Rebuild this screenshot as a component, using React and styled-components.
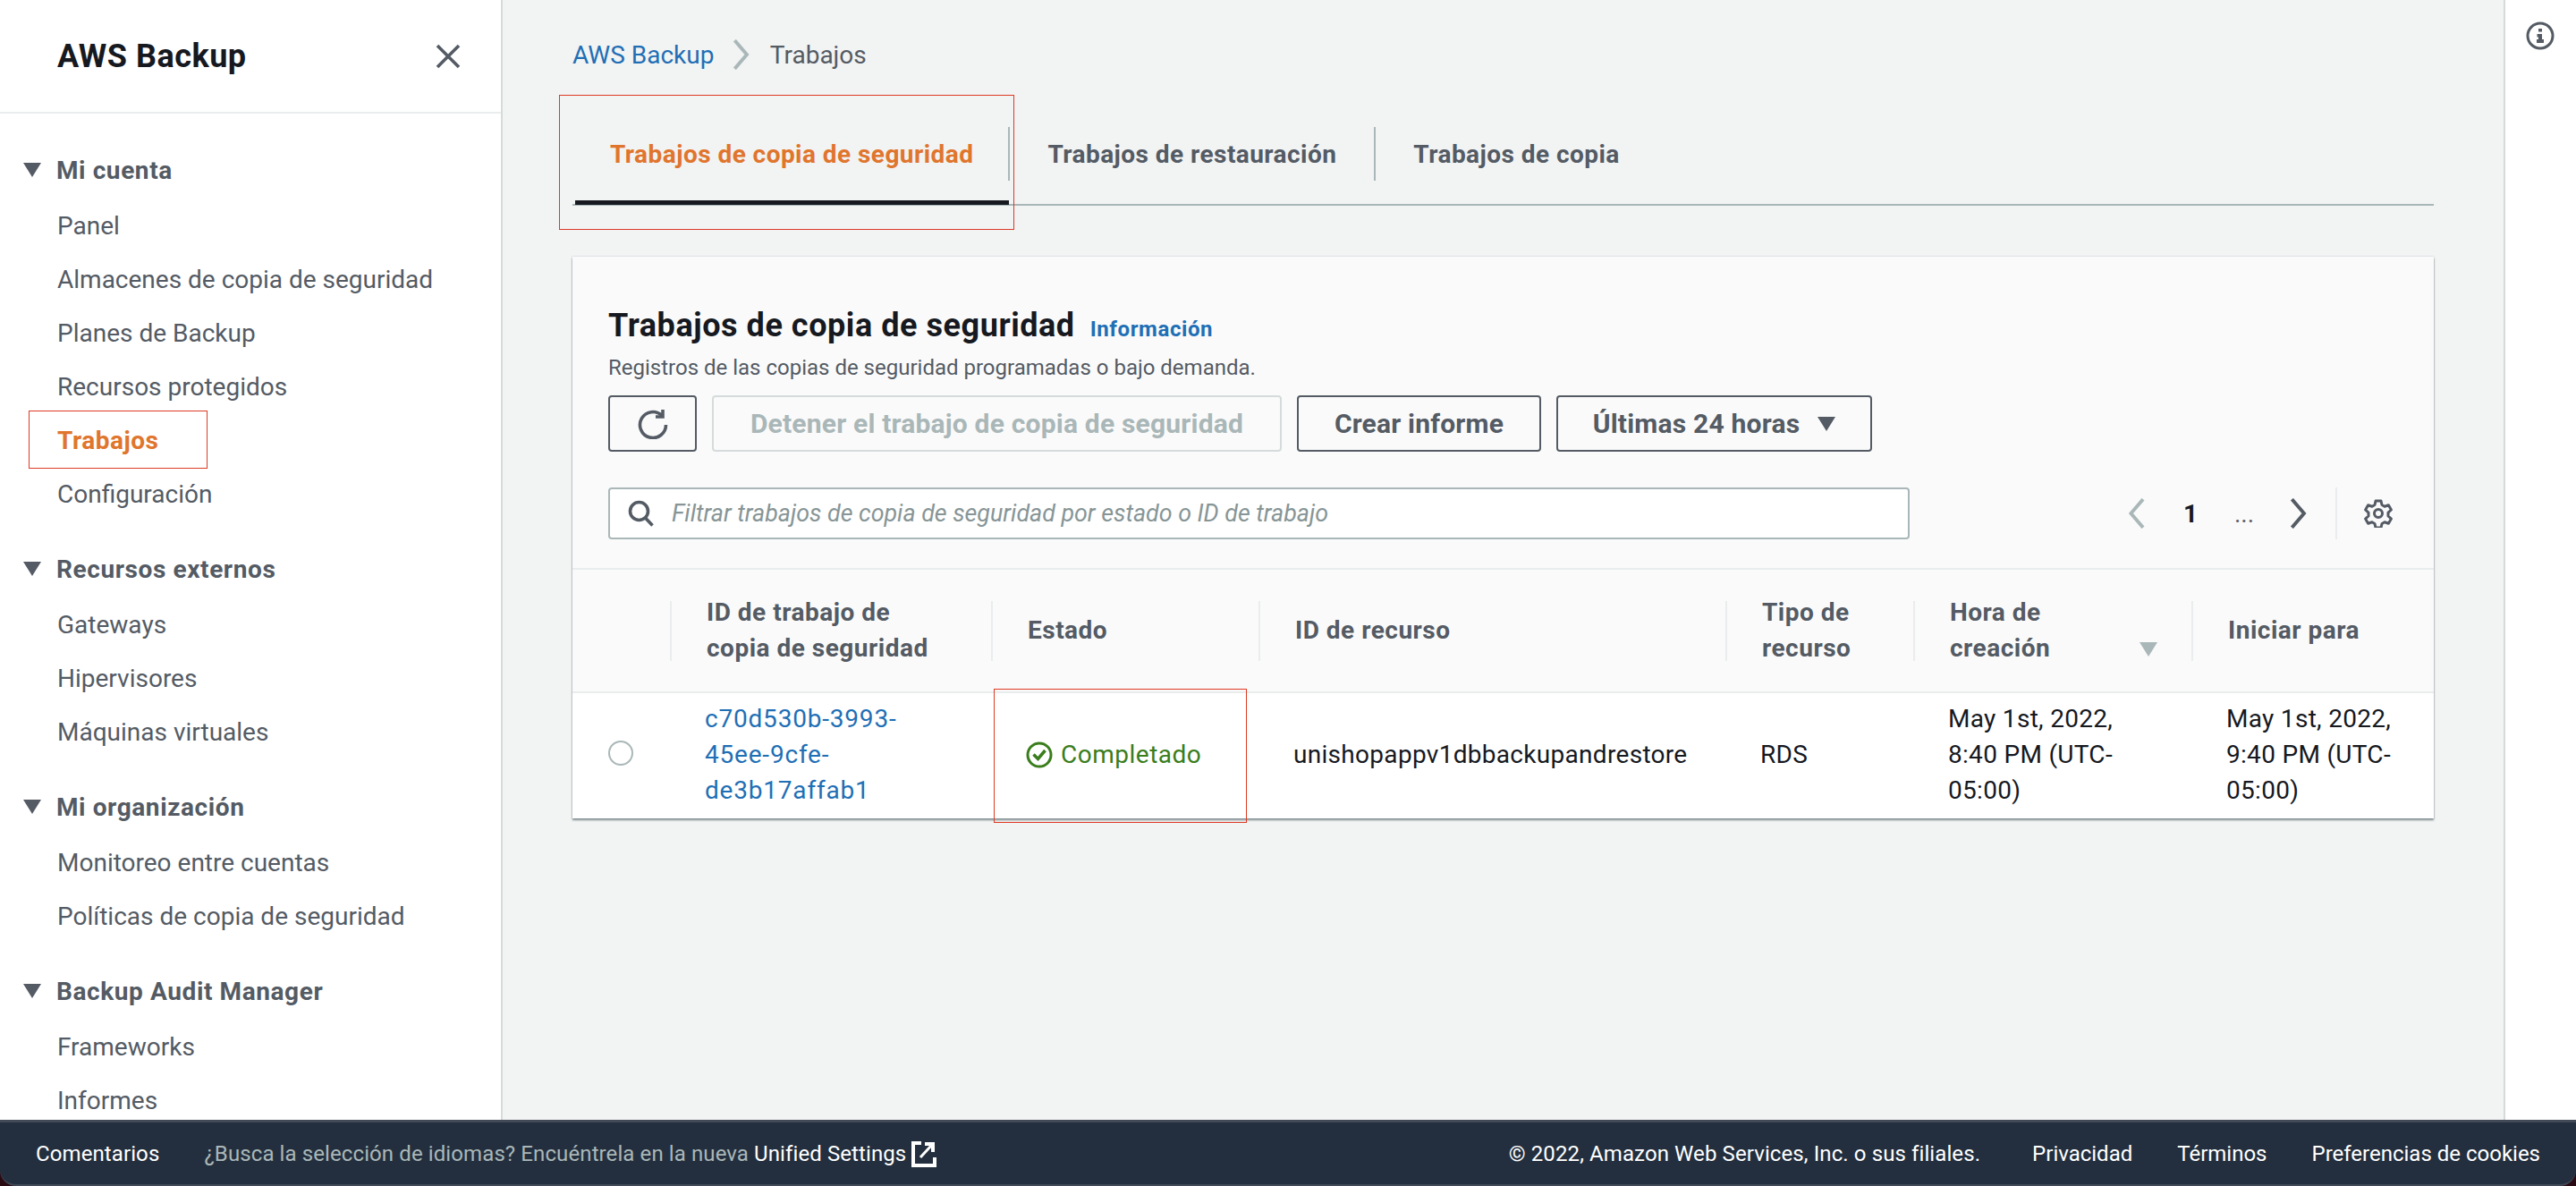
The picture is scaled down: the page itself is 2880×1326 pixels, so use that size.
import React from "react";
import styled, { createGlobalStyle } from "styled-components";

const GlobalStyle = createGlobalStyle`
  html, body {
    margin: 0;
    padding: 0;
    background: #2a0a12;
  }
  * {
    box-sizing: border-box;
  }
  body {
    font-family: Roboto, "Noto Sans", sans-serif;
    font-size: 28px;
    color: #16191f;
  }
`;

const Page = styled.div`
  width: 2880px;
  height: 1326px;
  display: flex;
  flex-direction: column;
  overflow: hidden;
`;

const Body = styled.div`
  flex: 1;
  min-height: 0;
  display: flex;
  background: #f2f3f3;
`;

const Sidebar = styled.aside`
  width: 562px;
  flex: none;
  background: #fff;
  border-right: 2px solid #d5dbdb;
  overflow: hidden;
`;

const SideHeader = styled.div`
  height: 127px;
  padding: 0 45px 0 64px;
  display: flex;
  align-items: center;
  justify-content: space-between;
  border-bottom: 2px solid #eaeded;
`;

const SideTitle = styled.div`
  font-size: 36px;
  font-weight: 700;
  letter-spacing: 0.5px;
  color: #16191f;
`;

const SideNav = styled.nav`
  padding-top: 33px;
`;

const Section = styled.div`
  margin-bottom: 24px;
`;

const SectionHead = styled.div`
  height: 60px;
  margin-bottom: 2px;
  padding-left: 26px;
  display: flex;
  align-items: center;
  gap: 17px;
  font-weight: 700;
  letter-spacing: 0.6px;
  color: #545b64;
`;

const NavItem = styled.div`
  position: relative;
  height: 60px;
  padding-left: 64px;
  display: flex;
  align-items: center;
  color: ${(p) => (p.$active ? "#e0752d" : "#545b64")};
  font-weight: ${(p) => (p.$active ? 700 : 400)};
  letter-spacing: ${(p) => (p.$active ? "0.5px" : "0")};
`;

const Mark = styled.div`
  position: absolute;
  border: 1px solid #dd3a24;
  pointer-events: none;
`;

const NavMark = styled(Mark)`
  left: 32px;
  top: -3px;
  width: 200px;
  height: 65px;
`;

const Main = styled.main`
  flex: 1;
  min-width: 0;
  padding: 0 78px;
`;

const Crumbs = styled.div`
  height: 122px;
  display: flex;
  align-items: center;
  gap: 20px;
  color: #545b64;
`;

const CrumbCurrent = styled.span`
  margin-left: 2px;
`;

const Link = styled.a`
  color: #1f6fb5;
`;

const Tabs = styled.div`
  height: 108px;
  display: flex;
  border-bottom: 2px solid #aab7b8;
`;

const TabLabel = styled.div`
  height: 60px;
  padding: 0 42px;
  display: flex;
  align-items: center;
  border-right: ${(p) => (p.$last ? "none" : "2px solid #aab7b8")};
`;

const Tab = styled.div`
  position: relative;
  height: 107px;
  padding-top: 20px;
  font-weight: 700;
  letter-spacing: 0.45px;
  color: ${(p) => (p.$active ? "#e0752d" : "#545b64")};
  &:first-child ${TabLabel} {
    padding-right: 39px;
  }
  &::after {
    content: "";
    display: ${(p) => (p.$active ? "block" : "none")};
    position: absolute;
    left: 3px;
    right: 1px;
    bottom: 0;
    height: 5px;
    background: #16191f;
  }
`;

const TabMark = styled(Mark)`
  left: -15px;
  top: -16px;
  width: 509px;
  height: 151px;
`;

const Card = styled.section`
  margin-top: 57px;
  background: #fafafa;
  box-shadow: 0 2px 2px rgba(0, 28, 36, 0.45), 0 0 2px rgba(0, 28, 36, 0.2);
`;

const CardHead = styled.div`
  padding: 55px 40px 32px;
  border-bottom: 2px solid #eaeded;
`;

const TitleRow = styled.div`
  display: flex;
  align-items: baseline;
  gap: 17px;
  line-height: 44px;
`;

const Title = styled.h2`
  margin: 0;
  font-size: 36px;
  font-weight: 700;
  letter-spacing: 0.55px;
  color: #16191f;
`;

const InfoLink = styled(Link)`
  font-size: 24px;
  font-weight: 700;
  letter-spacing: 0.6px;
`;

const Desc = styled.div`
  margin: 4px 0 14px;
  font-size: 24px;
  line-height: 34px;
  color: #545b64;
`;

const Actions = styled.div`
  display: flex;
  gap: 17px;
`;

const Button = styled.div`
  height: 63px;
  width: ${(p) => p.$width}px;
  display: flex;
  align-items: center;
  justify-content: center;
  gap: 20px;
  border: 2px solid ${(p) => (p.$disabled ? "#d5dbdb" : "#545b64")};
  border-radius: 4px;
  font-size: 30px;
  font-weight: 700;
  letter-spacing: 0.2px;
  color: ${(p) => (p.$disabled ? "#aab7b8" : "#545b64")};
`;

const FilterRow = styled.div`
  margin-top: 40px;
  display: flex;
  align-items: stretch;
`;

const SearchBox = styled.div`
  width: 1455px;
  height: 58px;
  padding-left: 20px;
  display: flex;
  align-items: center;
  gap: 19px;
  background: #fff;
  border: 2px solid #aab7b8;
  border-radius: 4px;
  font-style: italic;
  font-size: 26.8px;
  color: #879596;
`;

const Pager = styled.div`
  margin-left: auto;
  margin-right: 12px;
  display: grid;
  grid-template-columns: repeat(4, 60px);
  align-items: center;
  justify-items: center;
  color: #16191f;
`;

const PageNumber = styled.span`
  font-weight: 700;
`;

const PageDots = styled.span`
  color: #545b64;
`;

const Settings = styled.div`
  width: 70px;
  padding-left: 30px;
  display: flex;
  align-items: center;
  border-left: 2px solid #eaeded;
`;

const columns = "109px 359px 299px 522px 210px 311px 270px";

const HeadRow = styled.div`
  height: 138px;
  display: grid;
  grid-template-columns: ${columns};
  align-items: center;
  border-bottom: 2px solid #eaeded;
`;

const HeadCell = styled.div`
  height: 67px;
  padding: 0 38px 0 ${(p) => (p.$plain ? 0 : 39)}px;
  display: flex;
  align-items: center;
  justify-content: space-between;
  border-left: ${(p) => (p.$plain ? "none" : "2px solid #eaeded")};
  font-weight: 700;
  letter-spacing: 0.5px;
  line-height: 40px;
  color: #545b64;
  white-space: nowrap;
`;

const SortCaret = styled.svg`
  align-self: flex-end;
  margin-bottom: 5px;
  flex: none;
`;

const DataRow = styled.div`
  height: 140px;
  padding-bottom: 2px;
  display: grid;
  grid-template-columns: ${columns};
  align-items: center;
  background: #fff;
  line-height: 40px;
`;

const Cell = styled.div`
  position: relative;
  padding-left: 39px;
  letter-spacing: 0.3px;
  white-space: nowrap;
`;

const IdLink = styled(Link)`
  letter-spacing: 0.8px;
`;

const RadioCell = styled.div`
  padding-left: 40px;
  display: flex;
`;

const Radio = styled.span`
  width: 28px;
  height: 28px;
  margin-top: -4px;
  border: 2px solid #aab7b8;
  border-radius: 50%;
  background: #fff;
`;

const Status = styled.div`
  display: flex;
  align-items: center;
  gap: 9px;
  letter-spacing: 0.5px;
  color: #3a7d1c;
`;

const CellMark = styled(Mark)`
  left: 3px;
  top: -54px;
  width: 283px;
  height: 150px;
`;

const RightRail = styled.aside`
  width: 81px;
  flex: none;
  padding: 24px 0 0 23px;
  background: #fff;
  border-left: 2px solid #d5dbdb;
`;

const Footer = styled.footer`
  height: 74px;
  flex: none;
  padding: 0 40px;
  display: flex;
  align-items: center;
  font-size: 24px;
  letter-spacing: 0.1px;
  color: #fff;
  background: #232f3e;
  border-top: 3px solid #414a56;
  border-bottom: 2px solid #414a56;
  border-radius: 0 0 18px 18px;
`;

const Notice = styled.span`
  margin-left: 50px;
  color: #aab7b8;
`;

const NoticeLink = styled.span`
  color: #fff;
`;

const ExternalIcon = styled.svg`
  margin-left: 6px;
  flex: none;
`;

const FooterRight = styled.div`
  margin-left: auto;
  display: flex;
  gap: 50px;
  letter-spacing: 0;
`;

const Copyright = styled.span`
  margin-right: 8px;
  letter-spacing: 0.1px;
`;

const Triangle = ({ color = "#545b64", w = 20, h = 16 }) => (
  <svg width={w} height={h} viewBox="0 0 20 16" style={{ flex: "none" }}>
    <path d="M0 0h20L10 16z" fill={color} />
  </svg>
);

const CloseIcon = () => (
  <svg width="28" height="28" viewBox="0 0 28 28" fill="none" stroke="#545b64" strokeWidth="3.6">
    <path d="M2 2l24 24M26 2L2 26" />
  </svg>
);

const Chevron = ({ left, color = "#545b64", size = 34 }) => (
  <svg width={size * 0.6} height={size} viewBox="0 0 18 30" fill="none" stroke={color} strokeWidth="3.4">
    <path d={left ? "M15 1L3 15l12 14" : "M3 1l12 14L3 29"} />
  </svg>
);

const RefreshIcon = () => (
  <svg width="34" height="34" viewBox="0 0 34 34" fill="none" stroke="#545b64" strokeWidth="3.6">
    <path d="M27 7.500A14.500 14.500 0 1 0 31.500 18" />
    <path d="M28 1v8h-8" />
  </svg>
);

const SearchIcon = () => (
  <svg width="30" height="30" viewBox="0 0 30 30" fill="none" stroke="#545b64" strokeWidth="3.6">
    <circle cx="12.500" cy="12.500" r="10" />
    <path d="M19.500 20l8 8.500" />
  </svg>
);

const GearIcon = () => (
  <svg width="32" height="32" viewBox="0 0 32 32" fill="none" stroke="#545b64" strokeWidth="3" strokeLinejoin="round">
    <path d="M13 2h6l1 4.500 3 1.700 4.400-1.400 3 5.200-3.400 3.100v3.800l3.400 3.100-3 5.200-4.400-1.400-3 1.700-1 4.500h-6l-1-4.500-3-1.700-4.400 1.400-3-5.200 3.400-3.100v-3.800L1.600 12l3-5.200L9 8.200l3-1.700z" />
    <circle cx="16" cy="16" r="4.500" />
  </svg>
);

const CheckIcon = () => (
  <svg width="30" height="30" viewBox="0 0 30 30" fill="none" stroke="#3a7d1c" style={{ flex: "none" }}>
    <circle cx="15" cy="15" r="13" strokeWidth="3" />
    <path d="M8.500 14.500l5 5 8-9.500" strokeWidth="3.500" />
  </svg>
);

const InfoIcon = () => (
  <svg width="32" height="32" viewBox="0 0 32 32">
    <circle cx="16" cy="16" r="14" fill="none" stroke="#545b64" strokeWidth="3" />
    <path d="M14 8h4v3.500h-4zM12.500 14H18v6h2v4h-8v-4h2v-2.500h-1.500z" fill="#545b64" />
  </svg>
);

const ExternalLinkGlyph = () => (
  <ExternalIcon width="28" height="30" viewBox="0 0 28 30" fill="none" stroke="#fff" strokeWidth="4">
    <path d="M11 3H2v25h24v-9" />
    <path d="M10 19l12-13" strokeWidth="3" />
    <path d="M15 2h11v11h-4V6h-7z" fill="#fff" stroke="none" />
  </ExternalIcon>
);

const navSections = [
  {
    title: "Mi cuenta",
    items: ["Panel", "Almacenes de copia de seguridad", "Planes de Backup", "Recursos protegidos", "Trabajos", "Configuración"],
  },
  { title: "Recursos externos", items: ["Gateways", "Hipervisores", "Máquinas virtuales"] },
  { title: "Mi organización", items: ["Monitoreo entre cuentas", "Políticas de copia de seguridad"] },
  { title: "Backup Audit Manager", items: ["Frameworks", "Informes"] },
];

export default function App() {
  return (
    <Page>
      <GlobalStyle />
      <Body>
        <Sidebar>
          <SideHeader>
            <SideTitle>AWS Backup</SideTitle>
            <CloseIcon />
          </SideHeader>
          <SideNav>
            {navSections.map((section) => (
              <Section key={section.title}>
                <SectionHead>
                  <Triangle />
                  {section.title}
                </SectionHead>
                {section.items.map((item) => (
                  <NavItem key={item} $active={item === "Trabajos"}>
                    {item}
                    {item === "Trabajos" && <NavMark />}
                  </NavItem>
                ))}
              </Section>
            ))}
          </SideNav>
        </Sidebar>

        <Main>
          <Crumbs>
            <Link>AWS Backup</Link>
            <Chevron color="#aab7b8" />
            <CrumbCurrent>Trabajos</CrumbCurrent>
          </Crumbs>

          <Tabs>
            <Tab $active>
              <TabLabel>Trabajos de copia de seguridad</TabLabel>
              <TabMark />
            </Tab>
            <Tab>
              <TabLabel>Trabajos de restauración</TabLabel>
            </Tab>
            <Tab>
              <TabLabel $last>Trabajos de copia</TabLabel>
            </Tab>
          </Tabs>

          <Card>
            <CardHead>
              <TitleRow>
                <Title>Trabajos de copia de seguridad</Title>
                <InfoLink>Información</InfoLink>
              </TitleRow>
              <Desc>Registros de las copias de seguridad programadas o bajo demanda.</Desc>
              <Actions>
                <Button $width={99}>
                  <RefreshIcon />
                </Button>
                <Button $width={637} $disabled>
                  Detener el trabajo de copia de seguridad
                </Button>
                <Button $width={273}>Crear informe</Button>
                <Button $width={353}>
                  Últimas 24 horas
                  <Triangle />
                </Button>
              </Actions>
              <FilterRow>
                <SearchBox>
                  <SearchIcon />
                  Filtrar trabajos de copia de seguridad por estado o ID de trabajo
                </SearchBox>
                <Pager>
                  <Chevron left color="#aab7b8" />
                  <PageNumber>1</PageNumber>
                  <PageDots>...</PageDots>
                  <Chevron />
                </Pager>
                <Settings>
                  <GearIcon />
                </Settings>
              </FilterRow>
            </CardHead>

            <HeadRow>
              <HeadCell $plain />
              <HeadCell>
                <span>
                  ID de trabajo de
                  <br />
                  copia de seguridad
                </span>
              </HeadCell>
              <HeadCell>Estado</HeadCell>
              <HeadCell>ID de recurso</HeadCell>
              <HeadCell>
                <span>
                  Tipo de
                  <br />
                  recurso
                </span>
              </HeadCell>
              <HeadCell>
                <span>
                  Hora de
                  <br />
                  creación
                </span>
                <SortCaret width="20" height="16" viewBox="0 0 20 16">
                  <path d="M0 0h20L10 16z" fill="#aab7b8" />
                </SortCaret>
              </HeadCell>
              <HeadCell>Iniciar para</HeadCell>
            </HeadRow>

            <DataRow>
              <RadioCell>
                <Radio />
              </RadioCell>
              <Cell>
                <IdLink>
                  c70d530b-3993-
                  <br />
                  45ee-9cfe-
                  <br />
                  de3b17affab1
                </IdLink>
              </Cell>
              <Cell>
                <CellMark />
                <Status>
                  <CheckIcon />
                  Completado
                </Status>
              </Cell>
              <Cell>unishopappv1dbbackupandrestore</Cell>
              <Cell>RDS</Cell>
              <Cell>
                May 1st, 2022,
                <br />
                8:40 PM (UTC-
                <br />
                05:00)
              </Cell>
              <Cell>
                May 1st, 2022,
                <br />
                9:40 PM (UTC-
                <br />
                05:00)
              </Cell>
            </DataRow>
          </Card>
        </Main>

        <RightRail>
          <InfoIcon />
        </RightRail>
      </Body>

      <Footer>
        <span>Comentarios</span>
        <Notice>
          ¿Busca la selección de idiomas? Encuéntrela en la nueva <NoticeLink>Unified Settings</NoticeLink>
        </Notice>
        <ExternalLinkGlyph />
        <FooterRight>
          <Copyright>© 2022, Amazon Web Services, Inc. o sus filiales.</Copyright>
          <span>Privacidad</span>
          <span>Términos</span>
          <span>Preferencias de cookies</span>
        </FooterRight>
      </Footer>
    </Page>
  );
}
